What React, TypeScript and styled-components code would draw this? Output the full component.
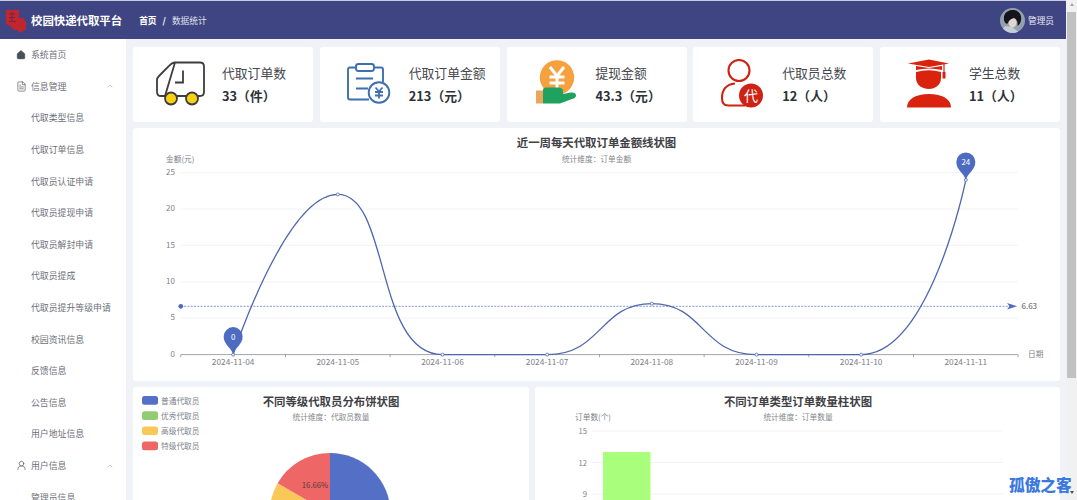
import React from "react";
import styled, { createGlobalStyle } from "styled-components";
import { House, FileText, UserRound, ChevronUp } from "lucide-react";

const FONT = `"Noto Sans CJK SC", "Open Sans", "Noto Sans", sans-serif`;

const Global = createGlobalStyle`
  html, body { margin: 0; padding: 0; height: 500px; overflow: hidden; background: #f1f2f8; }
  #root { height: 500px; }
  * { box-sizing: border-box; }
`;

const Page = styled.div`
  position: relative;
  display: flex;
  width: 1077px;
  height: 500px;
  overflow: hidden;
  font-family: ${FONT};
`;
const Main = styled.div`
  display: flex;
  flex-direction: column;
  width: 1066px;
  height: 500px;
`;
const Header = styled.header`
  display: flex;
  align-items: center;
  flex: none;
  height: 39px;
  padding: 0 12px 0 5px;
  background: #3f4583;
  border-top: 1px solid #c9cce0;
  color: #fff;
`;
const Logo = styled.svg`
  width: 22px;
  height: 24px;
  flex: none;
  margin-top: 2px;
`;
const Brand = styled.div`
  margin-left: 4px;
  font-size: 11.4px;
  font-weight: 700;
  white-space: nowrap;
`;
const Crumbs = styled.div`
  display: flex;
  align-items: center;
  margin-left: 17px;
  font-size: 8.7px;
  white-space: nowrap;
`;
const CrumbStrong = styled.span`
  font-weight: 700;
`;
const CrumbSep = styled.span`
  margin: 0 6px;
  font-weight: 700;
`;
const CrumbLight = styled.span`
  color: #dfe1ee;
`;
const User = styled.div`
  display: flex;
  align-items: center;
  gap: 3px;
  margin-left: auto;
  font-size: 8.7px;
  color: #e9eaf3;
`;
const Avatar = styled.svg`
  width: 25px;
  height: 25px;
  border-radius: 50%;
`;
const Body = styled.div`
  display: flex;
  flex: 1;
  min-height: 0;
`;
const Side = styled.nav`
  flex: none;
  width: 126px;
  height: 461px;
  overflow: hidden;
  background: #fff;
`;
const NavRow = styled.div<{ $sub?: boolean }>`
  display: flex;
  align-items: center;
  height: 31.6px;
  padding-left: ${(p) => (p.$sub ? "31px" : "15.5px")};
  padding-right: 12px;
  color: #6c7076;
  font-size: 8.9px;
  white-space: nowrap;
`;
const NavIcon = styled.span`
  display: inline-flex;
  width: 15.5px;
  flex: none;
  color: #4a4e55;
`;
const NavArrow = styled.span`
  display: inline-flex;
  margin-left: auto;
  color: #9a9da3;
`;
const Content = styled.main`
  flex: 1;
  min-width: 0;
  height: 461px;
  overflow: hidden;
  padding: 8px 6px 0 7px;
  display: flex;
  flex-direction: column;
  gap: 6px;
`;
const StatRow = styled.div`
  display: grid;
  grid-template-columns: repeat(5, 180px);
  justify-content: space-between;
  flex: none;
`;
const StatCard = styled.div`
  display: flex;
  align-items: center;
  height: 75px;
  background: #fff;
  border-radius: 3px;
  padding-left: 22px;
`;
const StatIcon = styled.svg`
  width: 52px;
  height: 52px;
  flex: none;
`;
const StatText = styled.div`
  margin-left: 15px;
  display: flex;
  flex-direction: column;
  gap: 5px;
  white-space: nowrap;
`;
const StatLabel = styled.div`
  font-size: 12.8px;
  line-height: 18px;
  color: #44474c;
`;
const StatValue = styled.div`
  font-size: 12.8px;
  line-height: 18px;
  font-weight: 700;
  color: #2f3135;
`;
const LineCard = styled.section`
  position: relative;
  flex: none;
  height: 253px;
  background: #fff;
  border-radius: 3px;
`;
const ChartSvg = styled.svg`
  display: block;
  width: 100%;
  height: 100%;
  font-family: ${FONT};
`;
const BottomRow = styled.div`
  display: grid;
  grid-template-columns: 396px 525px;
  justify-content: space-between;
  flex: none;
`;
const BottomCard = styled.section`
  height: 200px;
  background: #fff;
  border-radius: 3px;
  overflow: hidden;
`;
const ScrollTrack = styled.div`
  display: flex;
  flex-direction: column;
  align-items: center;
  width: 11px;
  height: 500px;
  background: #f1f1f1;
  padding-top: 3px;
`;
const ScrollArrow = styled.span<{ $down?: boolean }>`
  width: 0;
  height: 0;
  flex: none;
  border-left: 2.5px solid transparent;
  border-right: 2.5px solid transparent;
  ${(p) => (p.$down ? "border-top: 3px solid #505050;" : "border-bottom: 3px solid #a3a3a3;")}
`;
const ScrollThumb = styled.div`
  flex: none;
  width: 9px;
  height: 366px;
  margin-top: 6px;
  background: #c1c1c1;
`;
const ScrollGap = styled.div`
  flex: 1;
`;
const ScrollEnd = styled.div`
  height: 6px;
  flex: none;
`;
const Watermark = styled.div`
  position: absolute;
  left: 1009px;
  top: 474px;
  font-size: 15.7px;
  line-height: 22px;
  font-weight: 900;
  color: #3b78e0;
  white-space: nowrap;
  text-shadow: 0 0 1px #fff;
`;

const NAV: { label: string; sub?: boolean; icon?: React.ReactNode; arrow?: boolean }[] = [
  { label: "系统首页", icon: <House size={10} fill="currentColor" strokeWidth={1.5} /> },
  { label: "信息管理", icon: <FileText size={11} strokeWidth={1.4} />, arrow: true },
  { label: "代取类型信息", sub: true },
  { label: "代取订单信息", sub: true },
  { label: "代取员认证申请", sub: true },
  { label: "代取员提现申请", sub: true },
  { label: "代取员解封申请", sub: true },
  { label: "代取员提成", sub: true },
  { label: "代取员提升等级申请", sub: true },
  { label: "校园资讯信息", sub: true },
  { label: "反馈信息", sub: true },
  { label: "公告信息", sub: true },
  { label: "用户地址信息", sub: true },
  { label: "用户信息", icon: <UserRound size={11} strokeWidth={1.4} />, arrow: true },
  { label: "管理员信息", sub: true },
];

const TruckIcon = () => (
  <StatIcon viewBox="0 0 52 52">
    <path d="M20 3.5 H45 Q49 3.5 49 7.5 V33 Q49 37 45 37 H43 M31 37 H22 M10 37 H6 Q2 37 2 33 V21 Q2 19 4 17 L14 7 Q17 3.5 20 3.5 Z" fill="none" stroke="#3d3d3d" strokeWidth="1.8" />
    <path d="M28 11.5 V23.5 H20" fill="none" stroke="#3d3d3d" strokeWidth="1.8" />
    <circle cx="16" cy="39.5" r="6" fill="#f8d210" stroke="#3d3d3d" strokeWidth="1.8" />
    <circle cx="37" cy="39.5" r="6" fill="#f8d210" stroke="#3d3d3d" strokeWidth="1.8" />
  </StatIcon>
);
const ClipIcon = () => (
  <StatIcon viewBox="0 0 52 52">
    <path d="M14 8.5 H8 Q6 8.5 6 10.5 V38.5 Q6 40.5 8 40.5 H27" fill="none" stroke="#3f6fae" strokeWidth="1.9" />
    <path d="M32 8.5 H39 Q41 8.5 41 10.5 V23" fill="none" stroke="#3f6fae" strokeWidth="1.9" />
    <rect x="14" y="5" width="18" height="7" rx="2.5" fill="#fff" stroke="#3f6fae" strokeWidth="1.9" />
    <path d="M14 19.5 H31 M14 29.5 H26" stroke="#3f6fae" strokeWidth="1.9" />
    <circle cx="37" cy="33.5" r="10.3" fill="#fff" stroke="#3f6fae" strokeWidth="1.9" />
    <path d="M33.5 28.5 L37 32.5 L40.5 28.5 M33 33 H41 M33 36.5 H41 M37 32.5 V39.5" fill="none" stroke="#3f6fae" strokeWidth="1.8" />
  </StatIcon>
);
const CoinIcon = () => (
  <StatIcon viewBox="0 0 52 52">
    <circle cx="28" cy="18.5" r="17.2" fill="#f7a13e" />
    <path d="M21 8 L28 17 L35 8 M20.5 18 H35.5 M20.5 24 H35.5 M28 17 V31" fill="none" stroke="#fff" strokeWidth="3" />
    <rect x="7" y="31.5" width="7" height="13" fill="#e9a65d" />
    <path d="M14 31 Q14 28.5 17 28.5 H29 Q34 28.5 34 32 L34 35 L42 33.5 Q47 33 47 36.5 Q47 39 43 40 L31 44.5 H14 Z" fill="#1fa25f" />
  </StatIcon>
);
const CourierIcon = () => (
  <StatIcon viewBox="0 0 52 52">
    <circle cx="24" cy="11.5" r="10.5" fill="none" stroke="#cf2213" strokeWidth="2.1" />
    <path d="M20 24.5 Q7 26 7 39 Q7 46.5 13 46.5 H30" fill="none" stroke="#cf2213" strokeWidth="2.1" />
    <circle cx="36" cy="36.5" r="12" fill="#cf2213" />
    <text x="36" y="41.5" fontSize="14" fill="#fff" textAnchor="middle" fontFamily={FONT}>代</text>
  </StatIcon>
);
const GradIcon = () => (
  <StatIcon viewBox="0 0 52 52">
    <path d="M27 0.5 L47 4.5 L27 8 L6 4.5 Z" fill="#d9230f" />
    <path d="M14 7 L27 9 L40 7 V11 Q27 8 14 11 Z" fill="#d9230f" />
    <path d="M42 5 V14" stroke="#d9230f" strokeWidth="1.2" />
    <rect x="40.5" y="13" width="3" height="6.5" fill="#d9230f" />
    <path d="M14 13 Q27 9.5 39 13 V19 C39 26 33 30 27 30 C20 30 14 26 14 19 Z" fill="#d9230f" />
    <path d="M5 48.5 C5 40 14 35 27 35 C40 35 49 40 49 48.5 Z" fill="#d9230f" />
  </StatIcon>
);

const STATS = [
  { label: "代取订单数", value: "33（件）", icon: <TruckIcon /> },
  { label: "代取订单金额", value: "213（元）", icon: <ClipIcon /> },
  { label: "提现金额", value: "43.3（元）", icon: <CoinIcon /> },
  { label: "代取员总数", value: "12（人）", icon: <CourierIcon /> },
  { label: "学生总数", value: "11（人）", icon: <GradIcon /> },
];

/* Coordinates are relative to the chart card (card origin = page 133,128). */
const OX = 47.8;
const CAT = 104.67;
const Y0 = 226.6;
const UNIT = 7.28;
const DATA = [0, 22, 0, 0, 7, 0, 0, 24];
const DATES = ["2024-11-04", "2024-11-05", "2024-11-06", "2024-11-07", "2024-11-08", "2024-11-09", "2024-11-10", "2024-11-11"];
const PTS = DATA.map((v, i) => [OX + CAT * (i + 0.5), Y0 - v * UNIT] as const);

const clamp = (v: number, a: number, b: number) => Math.min(Math.max(v, Math.min(a, b)), Math.max(a, b));

function smoothPath(pts: readonly (readonly [number, number])[]) {
  const s = 0.5;
  let d = `M${pts[0][0]} ${pts[0][1]}`;
  let cx = pts[0][0];
  let cy = pts[0][1];
  for (let i = 1; i < pts.length; i++) {
    const [x, y] = pts[i];
    const [px, py] = pts[i - 1];
    if (i === pts.length - 1) {
      d += `C${cx} ${cy} ${x} ${y} ${x} ${y}`;
      break;
    }
    const [nx, ny] = pts[i + 1];
    const l0 = Math.hypot(x - px, y - py);
    const l1 = Math.hypot(nx - x, ny - y);
    const r = l1 / (l0 + l1);
    let ncx = clamp(x + (nx - px) * s * r, nx, x);
    let ncy = clamp(y + (ny - py) * s * r, ny, y);
    const c0x = clamp(x - ((ncx - x) * l0) / l1, px, x);
    const c0y = clamp(y - ((ncy - y) * l0) / l1, py, y);
    ncx = x + ((x - c0x) * l1) / l0;
    ncy = y + ((y - c0y) * l1) / l0;
    d += `C${cx} ${cy} ${c0x} ${c0y} ${x} ${y}`;
    cx = ncx;
    cy = ncy;
  }
  return d;
}

const Pin = ({ x, y, label }: { x: number; y: number; label: string }) => (
  <g transform={`translate(${x} ${y})`}>
    <path d="M0 0 C-2 -7 -9.5 -10 -9.5 -18 A9.5 9.5 0 1 1 9.5 -18 C9.5 -10 2 -7 0 0 Z" fill="#4d6cc1" />
    <text x="0" y="-15" fontSize="8" fill="#fff" textAnchor="middle">{label}</text>
  </g>
);

const LineChart = () => (
  <ChartSvg viewBox="0 0 927 253">
    <text x="463.5" y="19" fontSize="11.4" fontWeight="700" fill="#3f4145" textAnchor="middle">近一周每天代取订单金额线状图</text>
    <text x="463.5" y="33.5" fontSize="7.7" fill="#85878b" textAnchor="middle">统计维度：订单金额</text>
    <text x="33" y="33.5" fontSize="7.7" fill="#7d7f87">金额(元)</text>
    {[5, 10, 15, 20, 25].map((v) => (
      <line key={v} x1={OX} x2={885} y1={Y0 - v * UNIT} y2={Y0 - v * UNIT} stroke="#eef0f4" strokeWidth="0.8" />
    ))}
    {[0, 5, 10, 15, 20, 25].map((v) => (
      <text key={v} x="42" y={Y0 - v * UNIT + 2.2} fontSize="8" fill="#7d7f87" textAnchor="end">{v}</text>
    ))}
    <line x1={OX} x2={885} y1={Y0} y2={Y0} stroke="#7d7f87" strokeWidth="0.7" />
    {Array.from({ length: 9 }, (_, i) => (
      <line key={i} x1={OX + CAT * i} x2={OX + CAT * i} y1={Y0} y2={Y0 + 2.6} stroke="#7d7f87" strokeWidth="0.7" />
    ))}
    {DATES.map((d, i) => (
      <text key={d} x={PTS[i][0]} y={Y0 + 10.8} fontSize="8.3" fill="#7d7f87" textAnchor="middle">{d}</text>
    ))}
    <text x="895" y={Y0 + 2.5} fontSize="7.7" fill="#7d7f87">日期</text>
    <line x1={OX} x2={880} y1="178.3" y2="178.3" stroke="#4d6cc1" strokeWidth="0.7" strokeDasharray="2 1.3" />
    <circle cx={OX} cy="178.3" r="2.4" fill="#4d6cc1" />
    <path d="M884 178.3 L874 175 L876.5 178.3 L874 181.6 Z" fill="#4d6cc1" />
    <text x="888.5" y="181" fontSize="8" fill="#55585e">6.63</text>
    <path d={smoothPath(PTS)} fill="none" stroke="#4f67ad" strokeWidth="1.3" />
    {PTS.map(([x, y], i) => (
      <circle key={i} cx={x} cy={y} r="1.5" fill="#fff" stroke="#4f67ad" strokeWidth="0.8" />
    ))}
    <Pin x={PTS[0][0]} y={PTS[0][1]} label="0" />
    <Pin x={PTS[7][0]} y={PTS[7][1]} label="24" />
  </ChartSvg>
);

const LEGEND = [
  { label: "普通代取员", color: "#5470c6" },
  { label: "优秀代取员", color: "#91cc75" },
  { label: "高级代取员", color: "#fac858" },
  { label: "特级代取员", color: "#ee6666" },
];

/* Card origin = page 133,387. */
const slice = (cx: number, cy: number, r: number, a0: number, a1: number) => {
  const p = (a: number) => [cx + r * Math.sin((a * Math.PI) / 180), cy - r * Math.cos((a * Math.PI) / 180)];
  const [x0, y0] = p(a0);
  const [x1, y1] = p(a1);
  return `M${cx} ${cy} L${x0} ${y0} A${r} ${r} 0 ${a1 - a0 > 180 ? 1 : 0} 1 ${x1} ${y1} Z`;
};

const PieChart = () => (
  <ChartSvg viewBox="0 0 396 200">
    <text x="198" y="18.5" fontSize="11.4" fontWeight="700" fill="#3f4145" textAnchor="middle">不同等级代取员分布饼状图</text>
    <text x="198" y="33" fontSize="7.7" fill="#85878b" textAnchor="middle">统计维度：代取员数量</text>
    {LEGEND.map((l, i) => (
      <g key={l.label} transform={`translate(9 ${9 + i * 15.2})`}>
        <rect width="16" height="8.7" rx="2.5" fill={l.color} />
        <text x="19" y="7.5" fontSize="7.7" fill="#7d7f87">{l.label}</text>
      </g>
    ))}
    <path d={slice(197, 126.5, 60.5, 0, 180)} fill="#5470c6" />
    <path d={slice(197, 126.5, 60.5, 180, 240)} fill="#91cc75" />
    <path d={slice(197, 126.5, 60.5, 240, 300)} fill="#fac858" />
    <path d={slice(197, 126.5, 60.5, 300, 360)} fill="#ee6666" />
    <text x="182" y="100.5" fontSize="7.7" fill="#5a3a3a" textAnchor="middle">16.66%</text>
  </ChartSvg>
);

const BarChart = () => (
  <ChartSvg viewBox="0 0 525 200">
    <text x="263" y="18.5" fontSize="11.4" fontWeight="700" fill="#3f4145" textAnchor="middle">不同订单类型订单数量柱状图</text>
    <text x="263" y="33" fontSize="7.7" fill="#85878b" textAnchor="middle">统计维度：订单数量</text>
    <text x="40" y="33" fontSize="7.7" fill="#7d7f87">订单数(个)</text>
    {[
      { v: "15", y: 44 },
      { v: "12", y: 75.5 },
      { v: "9", y: 107 },
      { v: "6", y: 138.5 },
    ].map((t) => (
      <g key={t.v}>
        <line x1="57" x2="468" y1={t.y} y2={t.y} stroke="#eef0f4" strokeWidth="0.8" />
        <text x="52" y={t.y + 3} fontSize="7.7" fill="#7d7f87" textAnchor="end">{t.v}</text>
      </g>
    ))}
    <rect x="68" y="65" width="47.5" height="135" fill="#a9ff7c" />
  </ChartSvg>
);

export default function App() {
  return (
    <Page>
      <Global />
      <Main>
        <Header>
          <Logo viewBox="0 0 22 24">
            <path d="M1 1 H14 V9 H18 L21 13 V21 H18 A2.5 2.5 0 0 1 13 21 H9 L5 17 L1 15 Z" fill="#c0262e" />
            <path d="M4 5 H10 M4 8.5 H10 M7 3 V13 M4 12.5 H11" stroke="#7a2442" strokeWidth="1.1" />
          </Logo>
          <Brand>校园快递代取平台</Brand>
          <Crumbs>
            <CrumbStrong>首页</CrumbStrong>
            <CrumbSep>/</CrumbSep>
            <CrumbLight>数据统计</CrumbLight>
          </Crumbs>
          <User>
            <Avatar viewBox="0 0 25 25">
              <rect width="25" height="25" fill="#93a0ad" />
              <path d="M0 25 L5 18 L12 19 L20 25 Z" fill="#c4ced6" />
              <ellipse cx="12.5" cy="14.5" rx="4" ry="5" fill="#e4d6cf" />
              <path d="M4 12 C3 4 9 2 13 2 C19 2 22 7 21 12 C20.5 16 18.5 17 17.5 18 C18 14 17 11.5 14 10 C11 11 9 12 8 15 C7 17 4.5 15 4 12 Z" fill="#14151c" />
            </Avatar>
            管理员
          </User>
        </Header>
        <Body>
          <Side>
            {NAV.map((n) => (
              <NavRow key={n.label} $sub={n.sub}>
                {n.icon && <NavIcon>{n.icon}</NavIcon>}
                {n.label}
                {n.arrow && (
                  <NavArrow>
                    <ChevronUp size={8} strokeWidth={1.5} />
                  </NavArrow>
                )}
              </NavRow>
            ))}
          </Side>
          <Content>
            <StatRow>
              {STATS.map((s) => (
                <StatCard key={s.label}>
                  {s.icon}
                  <StatText>
                    <StatLabel>{s.label}</StatLabel>
                    <StatValue>{s.value}</StatValue>
                  </StatText>
                </StatCard>
              ))}
            </StatRow>
            <LineCard>
              <LineChart />
            </LineCard>
            <BottomRow>
              <BottomCard>
                <PieChart />
              </BottomCard>
              <BottomCard>
                <BarChart />
              </BottomCard>
            </BottomRow>
          </Content>
        </Body>
      </Main>
      <ScrollTrack>
        <ScrollArrow />
        <ScrollThumb />
        <ScrollGap />
        <ScrollArrow $down />
        <ScrollEnd />
      </ScrollTrack>
      <Watermark>孤傲之客</Watermark>
    </Page>
  );
}
